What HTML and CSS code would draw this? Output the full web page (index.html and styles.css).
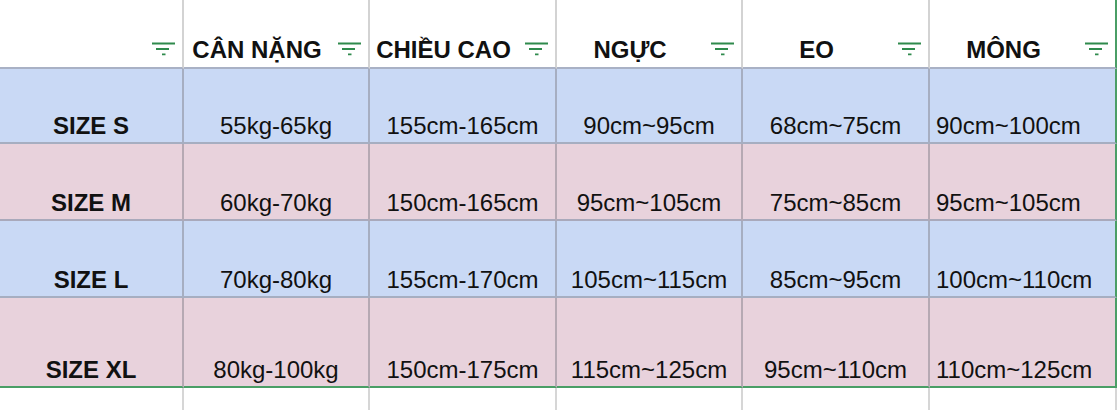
FILE: index.html
```html
<!DOCTYPE html>
<html lang="vi">
<head>
<meta charset="utf-8">
<title>Bảng size</title>
<link rel="stylesheet" href="styles.css">
</head>
<body>
<div class="sheet">
  <div class="cell head"><span class="label"></span><svg class="filter" viewBox="0 0 23 14"><path d="M0 1.5H23M4 7H17M10 12.3H13.5"/></svg></div>
  <div class="cell head"><span class="label">CÂN NẶNG</span><svg class="filter" viewBox="0 0 23 14"><path d="M0 1.5H23M4 7H17M10 12.3H13.5"/></svg></div>
  <div class="cell head"><span class="label">CHIỀU CAO</span><svg class="filter" viewBox="0 0 23 14"><path d="M0 1.5H23M4 7H17M10 12.3H13.5"/></svg></div>
  <div class="cell head"><span class="label">NGỰC</span><svg class="filter" viewBox="0 0 23 14"><path d="M0 1.5H23M4 7H17M10 12.3H13.5"/></svg></div>
  <div class="cell head"><span class="label">EO</span><svg class="filter" viewBox="0 0 23 14"><path d="M0 1.5H23M4 7H17M10 12.3H13.5"/></svg></div>
  <div class="cell head last"><span class="label">MÔNG</span><svg class="filter" viewBox="0 0 23 14"><path d="M0 1.5H23M4 7H17M10 12.3H13.5"/></svg></div>

  <div class="cell blue size">SIZE S</div>
  <div class="cell blue">55kg-65kg</div>
  <div class="cell blue">155cm-165cm</div>
  <div class="cell blue">90cm~95cm</div>
  <div class="cell blue">68cm~75cm</div>
  <div class="cell blue last">90cm~100cm</div>

  <div class="cell pink size">SIZE M</div>
  <div class="cell pink">60kg-70kg</div>
  <div class="cell pink">150cm-165cm</div>
  <div class="cell pink">95cm~105cm</div>
  <div class="cell pink">75cm~85cm</div>
  <div class="cell pink last">95cm~105cm</div>

  <div class="cell blue size">SIZE L</div>
  <div class="cell blue">70kg-80kg</div>
  <div class="cell blue">155cm-170cm</div>
  <div class="cell blue">105cm~115cm</div>
  <div class="cell blue">85cm~95cm</div>
  <div class="cell blue last">100cm~110cm</div>

  <div class="cell pink size final">SIZE XL</div>
  <div class="cell pink final">80kg-100kg</div>
  <div class="cell pink final">150cm-175cm</div>
  <div class="cell pink final">115cm~125cm</div>
  <div class="cell pink final">95cm~110cm</div>
  <div class="cell pink final last">110cm~125cm</div>

  <div class="cell empty"></div>
  <div class="cell empty"></div>
  <div class="cell empty"></div>
  <div class="cell empty"></div>
  <div class="cell empty"></div>
  <div class="cell empty"></div>
</div>
</body>
</html>
```

FILE: styles.css
```css
html, body {
  margin: 0;
  padding: 0;
  background: #ffffff;
  overflow: hidden;
}

.sheet {
  display: grid;
  grid-template-columns: 184px 186px 187px 186px 187px 187px;
  grid-template-rows: 69px 75px 77px 77px 90px 30px;
  width: 1117px;
  font-family: "Liberation Sans", Arial, sans-serif;
  font-size: 24px;
  line-height: 28px;
  color: #111111;
}

.cell {
  box-sizing: border-box;
  display: flex;
  align-items: flex-end;
  justify-content: center;
  padding-bottom: 2px;
  white-space: nowrap;
  border-right: 2px solid #a6aec1;
  border-bottom: 2px solid #a6aec1;
}

.head {
  background: #ffffff;
  font-weight: bold;
  padding-bottom: 3px;
  border-right-color: #d3d3d3;
  border-bottom-color: #a9b1c5;
}

.head .label {
  flex: 1;
  text-align: center;
  padding-right: 8px;
}

.filter {
  flex: none;
  width: 23px;
  height: 14px;
  margin-right: 7px;
  margin-bottom: 8px;
  fill: none;
  stroke: #2f8a4c;
  stroke-width: 1.8;
}

.blue {
  background: #c9d9f5;
}

.pink {
  background: #e8d2dc;
  border-right-color: #b6a9b3;
  border-bottom-color: #a9a9bb;
}

.size {
  font-weight: bold;
}

.blue.last,
.pink.last {
  justify-content: flex-start;
  padding-left: 6px;
}

.last {
  border-right-color: #4a9e66;
}

.head.last {
  border-right-color: #4a9e66;
}

.final {
  border-bottom-color: #4a9e66;
}

.empty {
  background: #ffffff;
  border-bottom: none;
  border-right-color: #d6d6d6;
}
```
